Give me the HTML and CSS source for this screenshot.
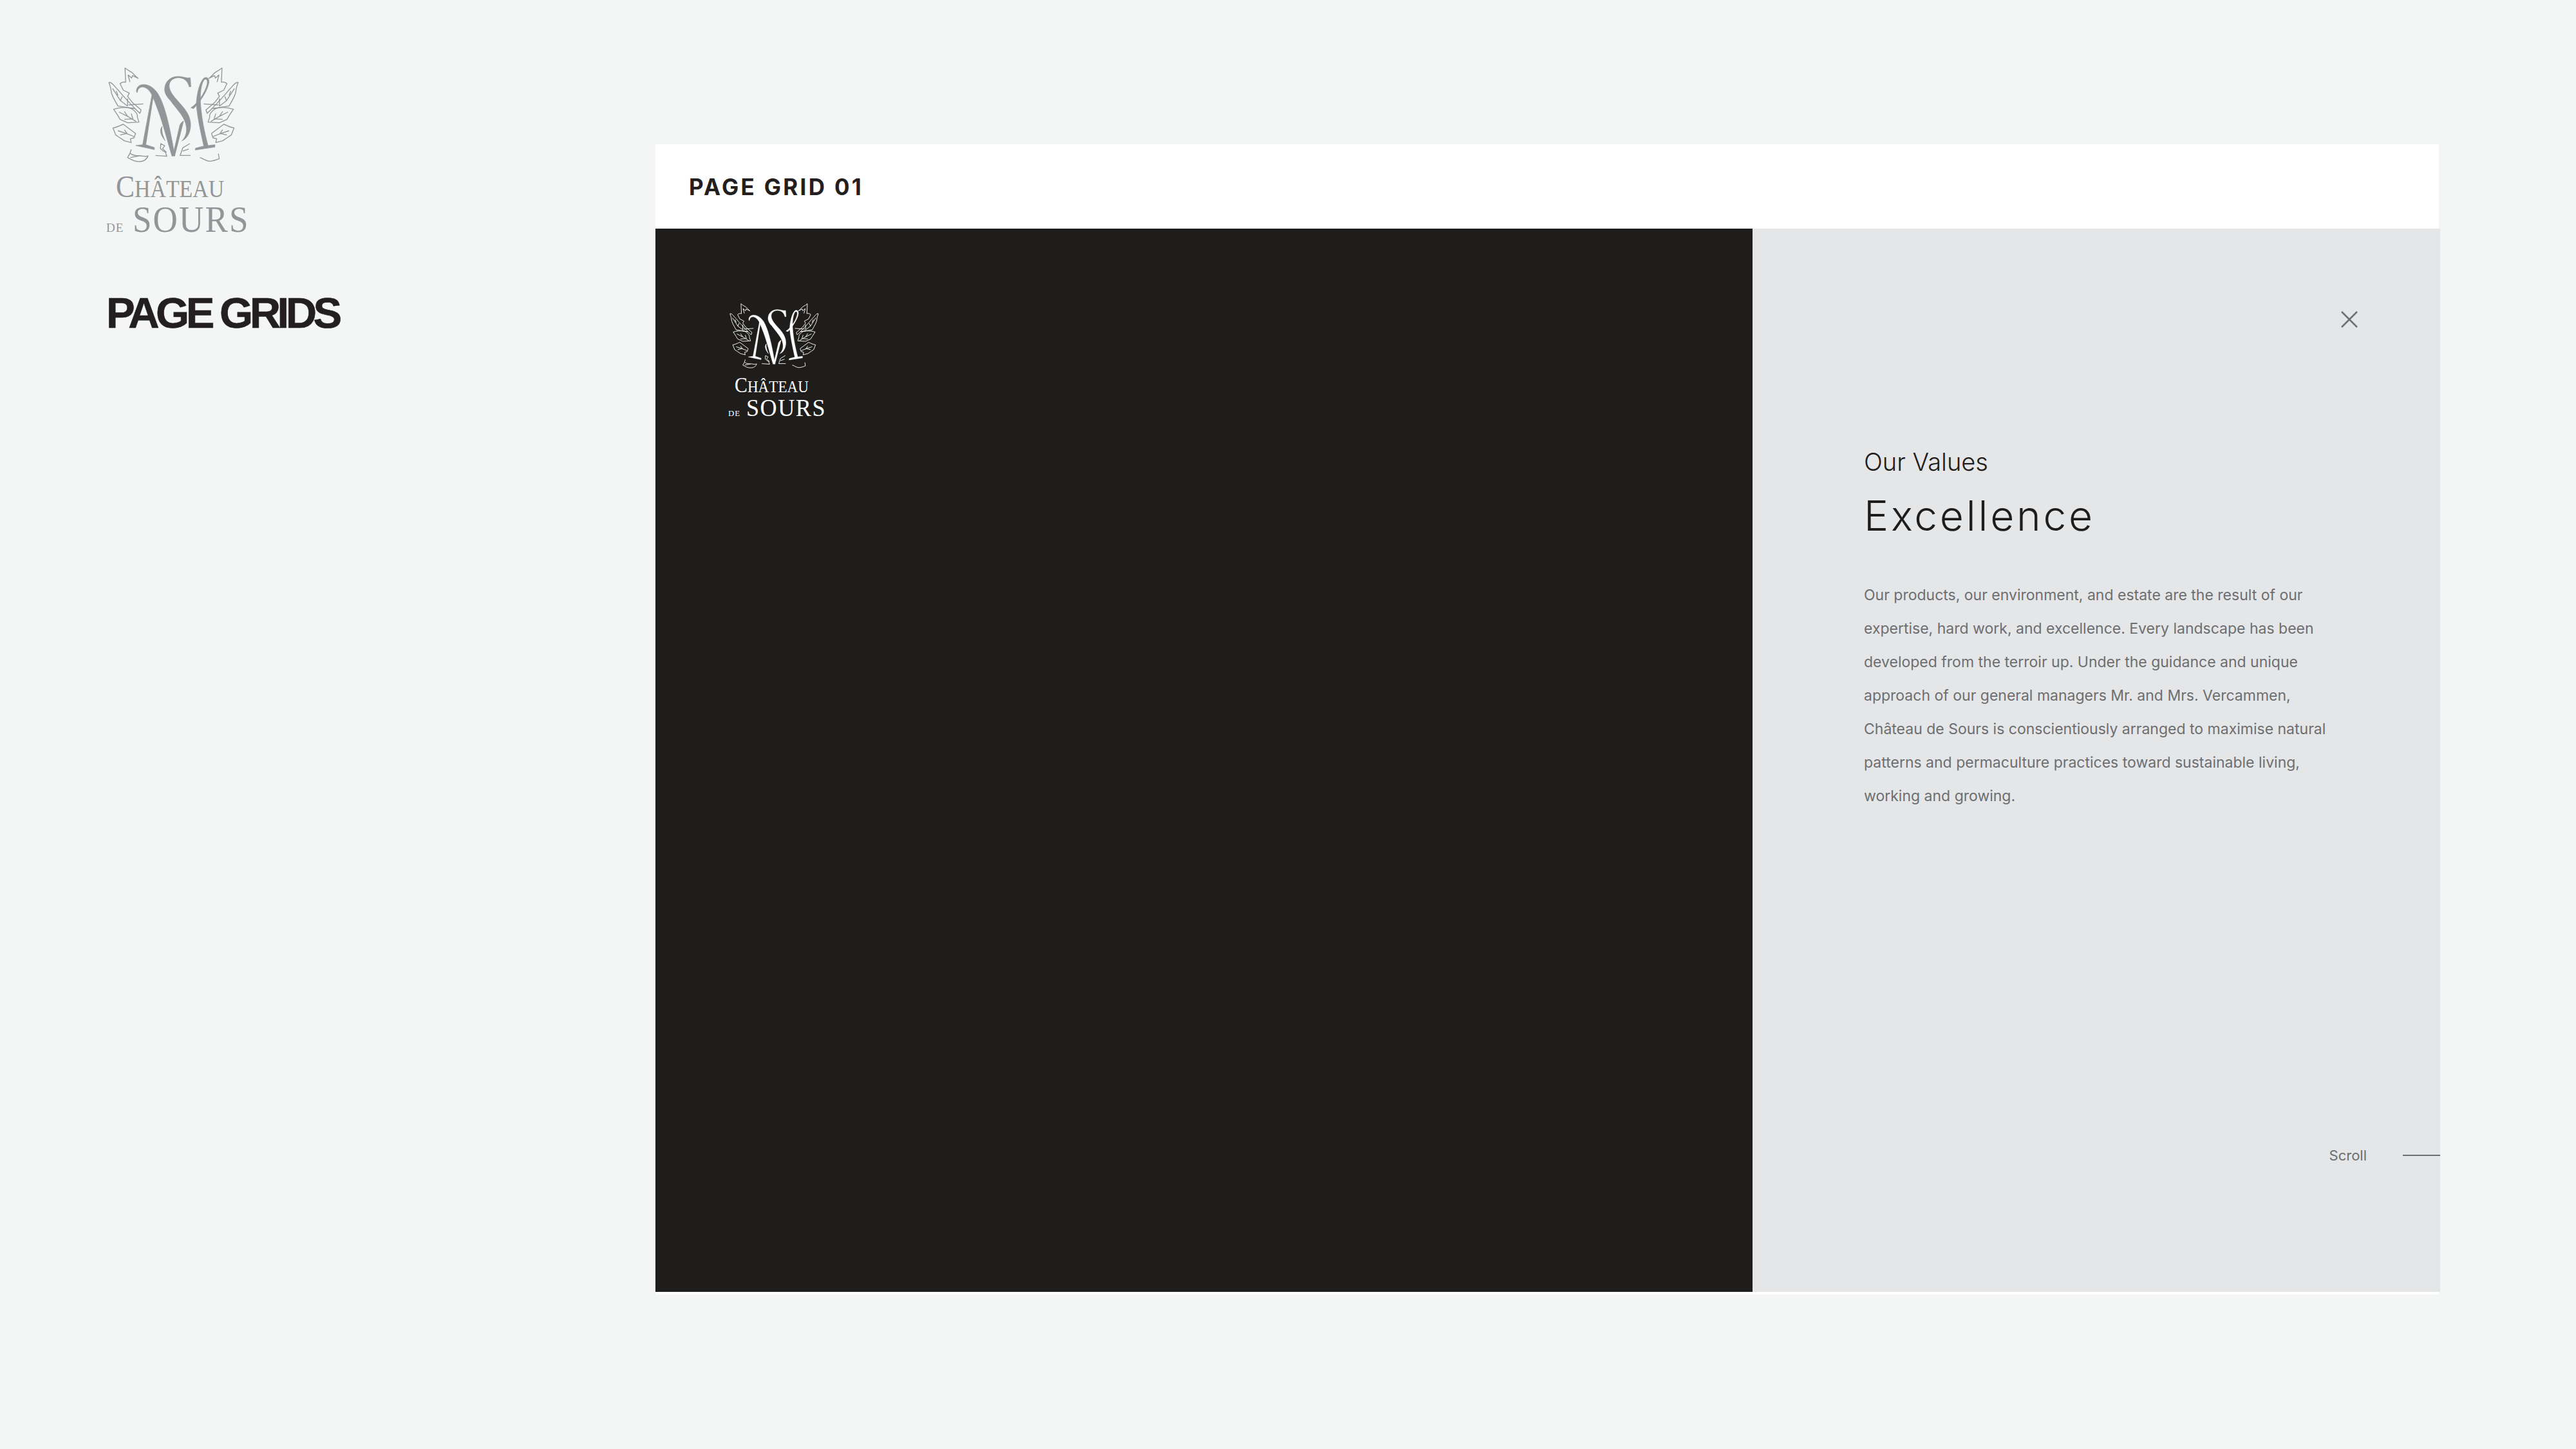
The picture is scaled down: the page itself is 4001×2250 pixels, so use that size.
FILE: index.html
```html
<!DOCTYPE html>
<html lang="en">

<head>
    <meta charset="UTF-8">
    <meta name="viewport" content="width=device-width, initial-scale=1.0">
    <title>Page Grids</title>
    <link rel="stylesheet" href="styles.css">
</head>

<body>
    <svg class="defs" width="0" height="0" aria-hidden="true">
        <symbol id="crest" viewBox="115 65 608 450">
            <g id="leaves" class="crest-line">
                <path d="M193 72 L196 140 M193 72 C205 85 225 90 232 100 C240 108 245 115 254 121 L228 108 L224 120 L207 105 M207 105 L216 138" />
                <path d="M196 140 C190 135 175 140 170 146 L185 176 L213 190 L205 205 L226 232 L268 268 L262 284 L240 262 L205 258" />
                <path d="M118 140 C130 135 145 160 165 180 C185 205 205 225 240 262 L160 250 L150 232 L138 210 L130 190 L126 165 Z" />
                <path d="M135 168 L172 225 L205 250 M152 180 L160 200 M180 205 L172 225 M205 215 L205 250 M210 245 L278 240" />
                <path d="M140 265 C160 258 190 255 210 258 C235 262 255 290 250 300 L258 325 L205 328 L170 312 L160 295 Z" />
                <path d="M165 278 L205 298 L245 322 M190 275 L205 298 M222 285 L230 310 M190 312 L225 310" />
                <path d="M137 352 C155 350 170 340 185 335 C205 350 225 365 242 378 L235 398 L218 403 L222 420 L190 412 L165 395 L150 385 Z" />
                <path d="M160 365 L200 378 L235 392 M190 360 L205 382 M170 385 L200 378" />
            </g>
            <use href="#leaves" transform="translate(838 0) scale(-1 1)" />
            <path class="crest-line" d="M222 452 C218 470 212 480 205 490 C220 498 240 512 262 508 C275 510 295 500 300 482 C285 490 270 478 252 482 C240 480 225 480 218 470" />
            <path class="crest-line" d="M218 490 L258 482" />
            <path class="crest-line" d="M542 490 C560 495 570 508 590 507 C610 505 625 498 632 495 L628 472" />
            <!-- monogram -->
            <path class="crest-fill" d="M246 182 C246 160 262 148 285 150 C310 152 330 170 345 190 C375 240 395 310 425 480 L412 484 C392 420 370 330 345 265 C335 240 325 210 315 192 C300 165 275 155 262 165 C252 172 252 180 250 188 Z" />
            <path class="crest-fill" d="M320 190 L327 190 L290 430 L330 443 L330 453 L243 434 L275 430 Z" />
            <path class="crest-fill" d="M416 480 L448 340 C452 330 460 322 466 320 L424 484 Z" />
            <path class="crest-fill" d="M497 118 L500 160 L492 160 C485 130 465 118 440 118 C410 120 395 140 400 165 C405 195 440 225 470 262 C495 295 505 330 495 365 C488 390 475 405 458 412 C478 392 485 365 475 330 C465 295 430 260 405 225 C385 205 375 185 378 165 C382 130 410 112 440 112 C465 112 480 122 497 118 Z" />
            <path class="crest-fill" d="M525 240 C528 190 540 140 560 120 C575 110 590 122 582 150 C575 180 545 230 512 262 L500 258 C530 240 565 190 575 150 C580 130 572 120 562 128 C548 145 542 190 545 240 C550 310 565 380 580 434 L612 430 L612 441 L520 455 L522 446 L560 436 C545 370 530 300 525 240 Z" />
            <path class="crest-fill" d="M366 345 C352 360 358 385 380 412 C368 385 362 365 366 345 Z" />
            <path class="crest-line" d="M360 425 L378 435 L368 448 L385 465 L372 460 L358 448 Z M335 480 L388 484 L380 462" />
            <path class="crest-line" d="M495 425 L462 445 L450 480 L498 480 M462 460 L490 450" />
        </symbol>
    </svg>

    <aside class="sidebar">
        <div class="logo logo-grey">
            <svg class="logo-crest"><use href="#crest" /></svg>
            <div class="logo-top"><span class="logo-big">C</span>HÂTEAU</div>
            <div class="logo-bottom"><span class="logo-de">DE</span><span class="logo-sours">SOURS</span></div>
        </div>
        <h1 class="page-title">PAGE GRIDS</h1>
    </aside>

    <main class="board">
        <div class="board-head">PAGE GRID 01</div>
        <div class="board-row">
            <div class="dark-side">
                <div class="logo logo-white">
                    <svg class="logo-crest"><use href="#crest" /></svg>
                    <div class="logo-top"><span class="logo-big">C</span>HÂTEAU</div>
                    <div class="logo-bottom"><span class="logo-de">DE</span><span class="logo-sours">SOURS</span></div>
                </div>
            </div>
            <div class="text-side">
                <svg class="close-icon" viewBox="0 0 26 26">
                    <path d="M1 1 L25 25 M25 1 L1 25" />
                </svg>
                <div class="eyebrow">Our Values</div>
                <h2 class="heading">Excellence</h2>
                <p class="copy">Our products, our environment, and estate are the result of our<br>expertise, hard work, and excellence. Every landscape has been<br>developed from the terroir up. Under the guidance and unique<br>approach of our general managers Mr. and Mrs. Vercammen,<br>Château de Sours is conscientiously arranged to maximise natural<br>patterns and permaculture practices toward sustainable living,<br>working and growing.</p>
                <div class="scroll-row">
                    <span>Scroll</span>
                    <span class="scroll-line"></span>
                </div>
            </div>
        </div>
        <div class="board-foot"></div>
    </main>
</body>

</html>
```

FILE: styles.css
```css
body {
    display: flex;
    width: 4001px;
    height: 2250px;
    margin: 0;
    overflow: hidden;
    background-color: #f4f6f5;
    font-family: Inter, "Liberation Sans", sans-serif;
}

.defs {
    position: absolute;
}

.sidebar {
    box-sizing: border-box;
    width: 1018px;
    padding: 103px 0 0 165px;
}

/* logo sizes are in em so the small one scales with font-size */
.logo {
    display: flex;
    flex-direction: column;
    font-family: "Liberation Serif", serif;
    font-size: 100px;
}

.logo-grey {
    color: #939598;
}

.logo-white {
    color: #ffffff;
    font-size: 68.4px;
}

.logo-crest {
    width: 2.03em;
    height: 1.5em;
    margin-left: 0.03em;
}

.crest-line {
    fill: none;
    stroke: currentColor;
    stroke-width: 4;
    stroke-linejoin: round;
}

.crest-fill {
    fill: currentColor;
    stroke: currentColor;
    stroke-width: 2;
}

.logo-top {
    height: 0.52em;
    margin: 0.27em 0 0 0.39em;
    font-size: 0.38em;
    line-height: 1.4em;
    white-space: nowrap;
    transform: scaleX(0.89);
    transform-origin: left;
}

.logo-big {
    font-size: 1.29em;
}

.logo-bottom {
    display: flex;
    align-items: baseline;
    margin-top: 0.28em;
    height: 0.6em;
    line-height: 0.6em;
    white-space: nowrap;
}

.logo-de {
    font-size: 0.19em;
    letter-spacing: 0.06em;
}

.logo-sours {
    margin-left: 0.24em;
    font-size: 0.57em;
    letter-spacing: 0.04em;
    transform: scaleX(0.93);
    transform-origin: left;
}

.page-title {
    margin: 75px 0 0;
    color: #231f20;
    font-family: "Liberation Sans", sans-serif;
    font-size: 67px;
    font-weight: 700;
    line-height: 80px;
    letter-spacing: -5.5px;
    -webkit-text-stroke: 0.6px #231f20;
}

.board {
    display: flex;
    flex-direction: column;
    width: 2772px;
    margin-top: 224px;
    height: 1786px;
}

.board-head {
    box-sizing: border-box;
    width: 2770px;
    height: 131px;
    padding-left: 52px;
    background-color: #ffffff;
    color: #231f20;
    font-size: 35px;
    font-weight: 700;
    line-height: 133px;
    letter-spacing: 3.3px;
}

.board-row {
    display: flex;
    height: 1651px;
}

.board-foot {
    width: 2770px;
    height: 4px;
    background-color: #ffffff;
}

.dark-side {
    box-sizing: border-box;
    width: 1704px;
    padding: 115px 0 0 113px;
    background-color: #1e1d1b;
}

.text-side {
    display: flex;
    flex-direction: column;
    box-sizing: border-box;
    width: 1068px;
    padding: 128px 0 0 173px;
    background-color: #e5e6e8;
    color: #1e1d1b;
}

.close-icon {
    align-self: flex-end;
    width: 26px;
    height: 26px;
    margin-right: 128px;
    fill: none;
    stroke: #6d6e70;
    stroke-width: 2.5;
}

.eyebrow {
    margin-top: 185px;
    font-size: 38px;
    font-weight: 300;
    line-height: 46px;
}

.heading {
    margin: 23px 0 0;
    font-size: 64px;
    font-weight: 300;
    line-height: 76px;
    letter-spacing: 3.8px;
}

.copy {
    margin: 59px 0 0;
    color: #6d6e70;
    font-size: 23px;
    font-weight: 400;
    line-height: 52px;
    white-space: nowrap;
}

.scroll-row {
    display: flex;
    align-items: center;
    justify-content: flex-end;
    gap: 56px;
    margin-top: 517px;
    color: #6d6e70;
    font-size: 22px;
    line-height: 30px;
}

.scroll-line {
    width: 58px;
    height: 2px;
    background-color: #6d6e70;
}
```
